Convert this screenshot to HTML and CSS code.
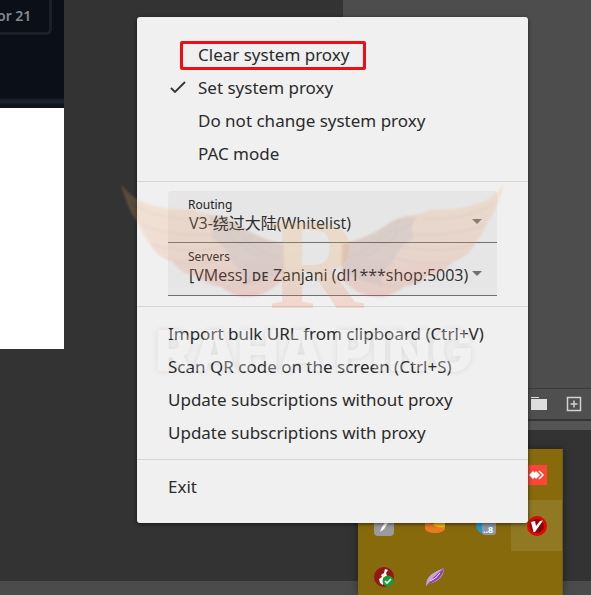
FILE: index.html
```
<!DOCTYPE html>
<html lang="en">
<head>
    <meta charset="UTF-8">
    <meta name="viewport" content="width=device-width, initial-scale=1.0">
    <title>System proxy menu</title>
    <link rel="stylesheet" href="styles.css">
</head>
<body>
    <div class="desktop">
        <div class="taskbar"></div>

        <!-- windows behind the menu -->
        <div class="browser">
            <div class="browser-dark"><span class="browser-tag">or 21</span></div>
            <div class="browser-page"></div>
        </div>
        <div class="panel">
            <div class="panel-body"></div>
            <div class="panel-tools">
                <button type="button" class="tool" aria-label="Folder">
                    <svg width="18" height="14" viewBox="0 0 18 14"><path d="M1 0h8v1H1zM1 2h16v11H1z" fill="#dedede"/></svg>
                </button>
                <button type="button" class="tool" aria-label="Add">
                    <svg width="16" height="16" viewBox="0 0 16 16"><path d="M1.5 1.5h13v13h-13zM8 4.5v7M4.5 8h7" fill="none" stroke="#d2d2d2" stroke-width="1.5"/></svg>
                </button>
            </div>
            <div class="panel-foot"></div>
        </div>

        <!-- tray icons -->
        <div class="tray">
            <div class="cell"></div>
            <div class="cell"></div>
            <div class="cell"></div>
            <div class="cell">
                <svg width="20" height="20" viewBox="0 0 20 20"><rect width="20" height="20" fill="#fb4635"/><path d="M2 10l4-4 4 4-4 4z" fill="#fff"/><path d="M6 10l3-4 4 4-4 4z" fill="#fff"/><path d="M12 6l4 4-4 4" fill="none" stroke="#fff" stroke-width="1.5"/></svg>
            </div>
            <div class="cell">
                <svg width="20" height="20" viewBox="0 0 20 20"><rect width="20" height="20" rx="4" fill="#9b9b9b"/><path d="M14 2L8 11l-2 5 4-3 6-9z" fill="#fff"/></svg>
            </div>
            <div class="cell">
                <svg width="20" height="20" viewBox="0 0 20 20"><path d="M0 5l10 4 10-4v8q-2 4-10 4T0 13z" fill="#ea7a20"/><path d="M7 8l13-4v7q-7 2-13-3z" fill="#f3b916"/></svg>
            </div>
            <div class="cell">
                <svg width="20" height="20" viewBox="0 0 20 20"><circle cx="9" cy="9" r="9" fill="#2796ce"/><rect x="6" y="5" width="14" height="14" rx="3" fill="#899aa2"/><text x="7" y="17" class="tray-num">..8</text></svg>
            </div>
            <div class="cell active">
                <svg width="20" height="20" viewBox="0 0 20 20"><circle cx="10" cy="10" r="10" fill="#dd0909"/><circle cx="10" cy="10" r="7" fill="#8d0303"/><path d="M4 6l4-1 1 5 4-5 3-.5L8 16H6.500z" fill="#fff"/></svg>
            </div>
            <div class="cell">
                <svg width="20" height="20" viewBox="0 0 20 20"><circle cx="10" cy="10" r="10" fill="#931717"/><path d="M11 2l3 1-2 3 1 3-4 2 1 3-1 4-3-2-1-4 3-2-1-2 3-2z" fill="#fff"/><circle cx="14" cy="14" r="5.500" fill="#169d35"/><path d="M11 14l2 2 4-4" fill="none" stroke="#fff" stroke-width="1.6"/></svg>
            </div>
            <div class="cell">
                <svg width="20" height="20" viewBox="0 0 20 20"><path d="M1 19Q1 11 7 7t12-6q0 8-6 12T4 16z" fill="#c9a4dc"/><path d="M1 19Q7 11 19 1q-1 8-7 12T4 16z" fill="#8d48b4"/><path d="M5 14q6-2 10-8" fill="none" stroke="#eee" stroke-width="1"/></svg>
            </div>
        </div>

        <div class="menu">
            <div class="group modes" role="menu">
                <button type="button" class="item" role="menuitemradio" aria-checked="false"><span class="mark"></span><span class="boxed">Clear system proxy</span></button>
                <button type="button" class="item" role="menuitemradio" aria-checked="true"><span class="mark"><svg width="16" height="13" viewBox="0 0 16 13"><path d="M1 7l4 4 10-10" fill="none" stroke="#333" stroke-width="1.800"/></svg></span>Set system proxy</button>
                <button type="button" class="item" role="menuitemradio" aria-checked="false"><span class="mark"></span>Do not change system proxy</button>
                <button type="button" class="item" role="menuitemradio" aria-checked="false"><span class="mark"></span>PAC mode</button>
            </div>
            <div class="group fields">
                <div class="field">
                    <label for="routing">Routing</label>
                    <select id="routing">
                        <option>V3-绕过大陆(Whitelist)</option>
                    </select>
                    <svg class="arrow" width="10" height="5" viewBox="0 0 10 5"><path d="M0 0h10L5 5z" fill="#727272"/></svg>
                </div>
                <div class="field">
                    <label for="servers">Servers</label>
                    <select id="servers">
                        <option>[VMess] ᴅᴇ Zanjani (dl1***shop:5003)</option>
                    </select>
                    <svg class="arrow" width="10" height="5" viewBox="0 0 10 5"><path d="M0 0h10L5 5z" fill="#727272"/></svg>
                </div>
            </div>
            <div class="group" role="menu">
                <button type="button" class="item" role="menuitem">Import bulk URL from clipboard (Ctrl+V)</button>
                <button type="button" class="item" role="menuitem">Scan QR code on the screen (Ctrl+S)</button>
                <button type="button" class="item" role="menuitem">Update subscriptions without proxy</button>
                <button type="button" class="item" role="menuitem">Update subscriptions with proxy</button>
            </div>
            <div class="group" role="menu">
                <button type="button" class="item" role="menuitem">Exit</button>
            </div>
        </div>

        <!-- watermark: wings, letter and name -->
        <svg class="watermark" width="390" height="205" viewBox="120 180 390 205">
            <defs>
                <linearGradient id="wing" x1="0" y1="0" x2="0" y2="1">
                    <stop offset="0" stop-color="#f7b36a"/>
                    <stop offset="0.600" stop-color="#ee9464"/>
                    <stop offset="1" stop-color="#e0604e"/>
                </linearGradient>
                <linearGradient id="letter" x1="0" y1="0" x2="0" y2="1">
                    <stop offset="0" stop-color="#fbb94f"/>
                    <stop offset="0.500" stop-color="#f7a04c"/>
                    <stop offset="1" stop-color="#ea4438"/>
                </linearGradient>
                <g id="half">
                    <path fill="url(#wing)" d="M121 184Q133 201 152 205Q174 211 193 209Q200 214 221 216Q232 219 240 226Q258 238 283 244L284 278Q266 299 241 297Q224 291 222 287Q205 285 198 276Q181 275 173 262Q155 256 151 245Q143 236 139 224Q128 212 121 184z"/>
                    <path fill="#4b2c3c" opacity=".4" d="M208 216Q228 216 240 226Q258 238 283 244L283 272Q262 282 242 286Q248 272 233 264Q229 248 211 238Q217 226 208 216z"/>
                    <path fill="none" stroke="#9c4a34" stroke-width="2" opacity=".4" d="M132 204Q160 221 203 219M139 224Q172 238 214 234M151 245Q186 254 226 247M173 262Q206 267 236 256M198 276Q225 279 246 266M222 287Q250 285 266 272"/>
                    <path fill="none" stroke="#3a2635" stroke-width="2" opacity=".25" d="M210 220q6 8 18 10 2 12 16 14 4 10 18 11M226 220q4 12 18 16 4 10 18 14 4 6 18 8"/>
                </g>
            </defs>
            <g class="wings">
                <use href="#half"/>
                <use href="#half" transform="matrix(-1 0 0 1 625 0)"/>
            </g>
            <text class="mark-letter" x="316" y="308" text-anchor="middle" fill="url(#letter)">R</text>
            <text class="mark-name" x="314" y="371" text-anchor="middle">RAHA PING</text>
        </svg>
    </div>
</body>
</html>
```
FILE: styles.css
```
body {
    margin: 0;
    font-family: "Noto Sans", "Noto Sans CJK SC", sans-serif;
    background-color: #333;
}
button,
select {
    font-family: inherit;
    color: #2b2b2b;
    background: none;
    border: none;
    padding: 0;
    margin: 0;
}
svg {
    display: block;
}
.desktop {
    position: relative;
    min-height: 100vh;
    overflow: hidden;
}
.taskbar {
    position: absolute;
    left: 0;
    right: 0;
    bottom: 0;
    height: 14px;
    background-color: #4b4b4b;
}

/* background windows */
.browser {
    position: absolute;
    left: 0;
    top: 0;
    width: 64px;
}
.browser-dark {
    height: 108px;
    background: linear-gradient(#0b0f18 98px, #1a222b 100px, #1a222b 103px, #0e151b 104px);
}
.browser-tag {
    display: block;
    width: 52px;
    height: 35px;
    box-sizing: border-box;
    border-right: 3px solid #1b202b;
    border-bottom: 3px solid #1b202b;
    border-bottom-right-radius: 6px;
    color: #858990;
    font-size: 14px;
    font-weight: 600;
    line-height: 31px;
    text-indent: -3px;
}
.browser-page {
    height: 241px;
    background-color: #fff;
}
.panel {
    position: absolute;
    left: 343px;
    right: 0;
    top: 0;
}
.panel-body {
    height: 388px;
    background-color: #4d4d4d;
}
.panel-tools {
    display: flex;
    justify-content: flex-end;
    align-items: center;
    gap: 18px;
    height: 30px;
    padding-right: 9px;
    border-top: 1px solid #3a3a3a;
    border-bottom: 2px solid #353535;
    background-color: #4f4f4f;
}
.panel-foot {
    height: 9px;
    background-color: #555;
}

/* tray */
.tray {
    position: absolute;
    right: 28px;
    bottom: 0;
    display: grid;
    grid-template-columns: repeat(4, 51px);
    grid-auto-rows: 51px;
    height: 146px;
    border-right: 1px solid #6e5c20;
    background-color: #866a0b;
    box-shadow: 0 0 8px rgba(0, 0, 0, 0.4);
}
.cell {
    display: flex;
    align-items: center;
    justify-content: center;
}
.cell.active {
    background-color: #917822;
}
.tray-num {
    font-size: 9px;
    font-weight: 700;
    fill: #fff;
}

/* menu */
.menu {
    position: absolute;
    left: 137px;
    right: 63px;
    top: 17px;
    padding: 11px 0 10px;
    border-radius: 3px;
    background-color: #f0f0f0;
    box-shadow: 0 1px 4px rgba(0, 0, 0, 0.6);
}
.group {
    padding: 10px 0;
}
.group + .group {
    border-top: 1px solid #d5d5d5;
}
.modes {
    padding-bottom: 11px;
}
.item {
    display: flex;
    align-items: center;
    width: 100%;
    height: 33px;
    padding-left: 31px;
    font-size: 17px;
    white-space: nowrap;
}
.mark {
    width: 30px;
    padding-left: 2px;
    box-sizing: border-box;
}
.boxed {
    position: relative;
}
.boxed::after {
    content: "";
    position: absolute;
    inset: -2px -17px -4px -18px;
    border: 3px solid #f20d12;
    border-radius: 2px;
}
.group.fields {
    padding: 9px 31px 10px;
}
.field {
    position: relative;
    display: flex;
    flex-direction: column;
    height: 52px;
    box-sizing: border-box;
    border-bottom: 1px solid #707070;
    background-color: #e6e6e6;
}
.field + .field {
    height: 53px;
}
.field:first-child {
    border-top-left-radius: 4px;
    border-top-right-radius: 4px;
}
.field label {
    padding: 6px 20px 0;
    font-size: 12px;
    line-height: 15px;
    color: #222;
}
.field select {
    appearance: none;
    width: 100%;
    height: 22px;
    padding: 0 21px;
    font-family: "Open Sans", "Noto Sans", "Noto Sans CJK SC", sans-serif;
    font-size: 16px;
    line-height: 22px;
}
.arrow {
    position: absolute;
    right: 15px;
    top: 28px;
    pointer-events: none;
}

/* watermark */
.watermark {
    position: absolute;
    left: 120px;
    top: 180px;
    pointer-events: none;
}
.wings {
    opacity: 0.2;
    filter: blur(1px);
}
.mark-letter {
    font-family: "Liberation Serif", serif;
    font-size: 130px;
    font-weight: 700;
    opacity: 0.18;
}
.mark-name {
    font-family: Inter, sans-serif;
    font-size: 56px;
    font-weight: 900;
    fill: #f4f4f4;
    opacity: 0.3;
    filter: drop-shadow(0 0 3px rgba(0, 0, 0, 0.3));
}
```
